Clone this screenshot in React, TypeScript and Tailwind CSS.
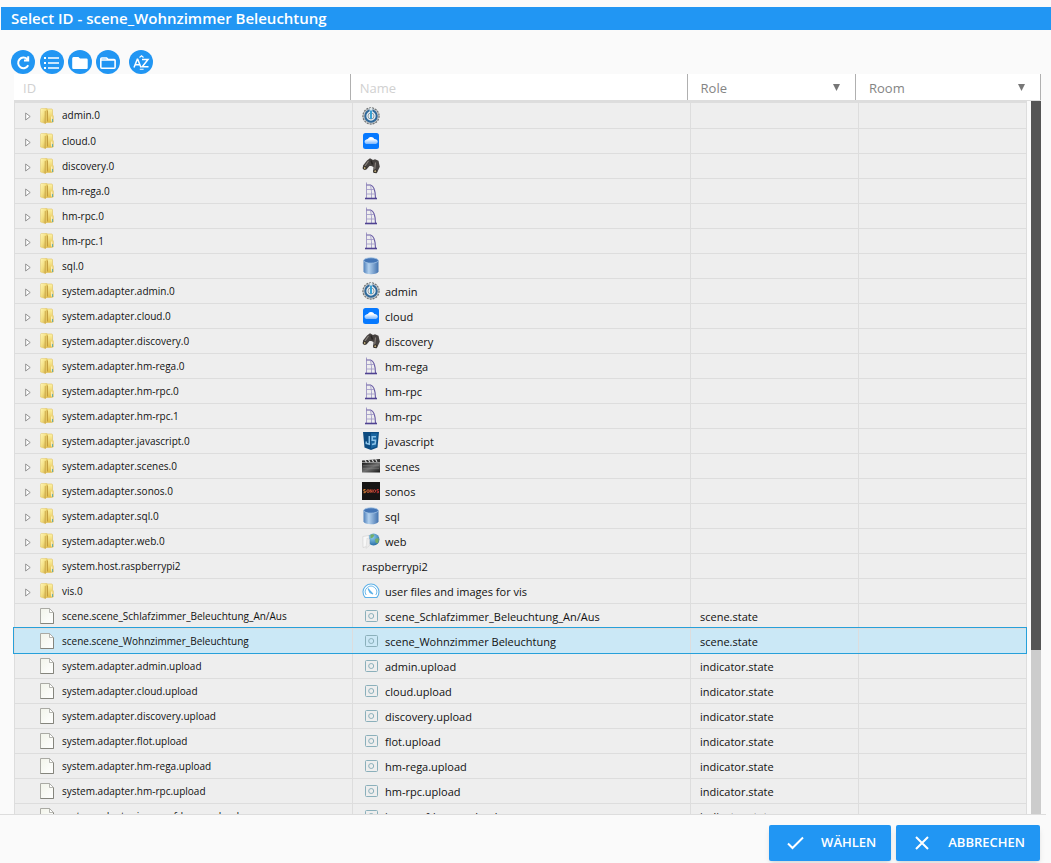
import React, { useState } from 'react';

type IconName =
  | 'admin'
  | 'cloud'
  | 'discovery'
  | 'homematic'
  | 'sql'
  | 'javascript'
  | 'scenes'
  | 'sonos'
  | 'web'
  | 'vis'
  | 'state';

interface ObjectRow {
  id: string;
  name?: string;
  icon?: IconName;
  role?: string;
  folder?: boolean;
}

const ROWS: ObjectRow[] = [
  { id: 'admin.0', icon: 'admin', folder: true },
  { id: 'cloud.0', icon: 'cloud', folder: true },
  { id: 'discovery.0', icon: 'discovery', folder: true },
  { id: 'hm-rega.0', icon: 'homematic', folder: true },
  { id: 'hm-rpc.0', icon: 'homematic', folder: true },
  { id: 'hm-rpc.1', icon: 'homematic', folder: true },
  { id: 'sql.0', icon: 'sql', folder: true },
  { id: 'system.adapter.admin.0', name: 'admin', icon: 'admin', folder: true },
  { id: 'system.adapter.cloud.0', name: 'cloud', icon: 'cloud', folder: true },
  { id: 'system.adapter.discovery.0', name: 'discovery', icon: 'discovery', folder: true },
  { id: 'system.adapter.hm-rega.0', name: 'hm-rega', icon: 'homematic', folder: true },
  { id: 'system.adapter.hm-rpc.0', name: 'hm-rpc', icon: 'homematic', folder: true },
  { id: 'system.adapter.hm-rpc.1', name: 'hm-rpc', icon: 'homematic', folder: true },
  { id: 'system.adapter.javascript.0', name: 'javascript', icon: 'javascript', folder: true },
  { id: 'system.adapter.scenes.0', name: 'scenes', icon: 'scenes', folder: true },
  { id: 'system.adapter.sonos.0', name: 'sonos', icon: 'sonos', folder: true },
  { id: 'system.adapter.sql.0', name: 'sql', icon: 'sql', folder: true },
  { id: 'system.adapter.web.0', name: 'web', icon: 'web', folder: true },
  { id: 'system.host.raspberrypi2', name: 'raspberrypi2', folder: true },
  { id: 'vis.0', name: 'user files and images for vis', icon: 'vis', folder: true },
  { id: 'scene.scene_Schlafzimmer_Beleuchtung_An/Aus', name: 'scene_Schlafzimmer_Beleuchtung_An/Aus', icon: 'state', role: 'scene.state' },
  { id: 'scene.scene_Wohnzimmer_Beleuchtung', name: 'scene_Wohnzimmer Beleuchtung', icon: 'state', role: 'scene.state' },
  { id: 'system.adapter.admin.upload', name: 'admin.upload', icon: 'state', role: 'indicator.state' },
  { id: 'system.adapter.cloud.upload', name: 'cloud.upload', icon: 'state', role: 'indicator.state' },
  { id: 'system.adapter.discovery.upload', name: 'discovery.upload', icon: 'state', role: 'indicator.state' },
  { id: 'system.adapter.flot.upload', name: 'flot.upload', icon: 'state', role: 'indicator.state' },
  { id: 'system.adapter.hm-rega.upload', name: 'hm-rega.upload', icon: 'state', role: 'indicator.state' },
  { id: 'system.adapter.hm-rpc.upload', name: 'hm-rpc.upload', icon: 'state', role: 'indicator.state' },
  { id: 'system.adapter.icons-mfd-png.upload', name: 'icons-mfd-png.upload', icon: 'state', role: 'indicator.state' },
];

// Gradients shared by all row icons
const IconDefs = () => (
  <svg className="absolute h-0 w-0" aria-hidden="true">
    <defs>
      <linearGradient id="folderLeft" x1="0" y1="0" x2="1" y2="1">
        <stop offset="0" stopColor="#fff6b8" />
        <stop offset="0.5" stopColor="#f3df80" />
        <stop offset="1" stopColor="#cda540" />
      </linearGradient>
      <linearGradient id="folderRight" x1="0" y1="0" x2="0" y2="1">
        <stop offset="0" stopColor="#fdf3a4" />
        <stop offset="1" stopColor="#e2bb45" />
      </linearGradient>
      <linearGradient id="page" x1="0" y1="0" x2="1" y2="1">
        <stop offset="0" stopColor="#f2f4ea" />
        <stop offset="1" stopColor="#ffffff" />
      </linearGradient>
      <linearGradient id="cloudFill" x1="0" y1="0" x2="0" y2="1">
        <stop offset="0.3" stopColor="#ffffff" />
        <stop offset="1" stopColor="#79b6ff" />
      </linearGradient>
      <linearGradient id="cylinder" x1="0" y1="0" x2="1" y2="0">
        <stop offset="0" stopColor="#4f80bb" />
        <stop offset="0.35" stopColor="#b3d1ee" />
        <stop offset="1" stopColor="#4372ae" />
      </linearGradient>
      <linearGradient id="board" x1="0" y1="0" x2="1" y2="1">
        <stop offset="0" stopColor="#1c1c1c" />
        <stop offset="0.5" stopColor="#707070" />
        <stop offset="1" stopColor="#151515" />
      </linearGradient>
      <radialGradient id="globe" cx="0.4" cy="0.3" r="0.8">
        <stop offset="0" stopColor="#8fd0f2" />
        <stop offset="1" stopColor="#1d629c" />
      </radialGradient>
    </defs>
  </svg>
);

const FolderIcon = () => (
  <svg width="14" height="16" viewBox="0 0 14 16" aria-hidden="true">
    <path d="M5 1h6.5q1 0 1 1v5l.8 1v6l-2.300.5H5z" fill="url(#folderRight)" stroke="#dfc05a" strokeWidth=".6" />
    <path d="M.5 1.500Q.5.500 1.500.500H7v13.500l-1.500 1.500-5-1.500z" fill="url(#folderLeft)" stroke="#e0c565" strokeWidth=".5" />
    <path d="M5.300 3 7.500 1v13l-2.200 1.500z" fill="#e4c765" />
    <path d="M7.500 2.500v11" stroke="#b58a2c" strokeWidth=".7" />
    <path d="M5.200 3v12.500" stroke="#c09a3a" strokeWidth=".6" />
    <path d="M11.800 8.500v5" stroke="#fffbe0" strokeWidth="1" />
    <path d="M12.500 11v3" stroke="#4aa6b0" strokeWidth=".8" />
  </svg>
);

const PageIcon = () => (
  <svg width="14" height="16" viewBox="0 0 14 16" aria-hidden="true">
    <path d="M.5.500h9l4 4v11H.5z" fill="url(#page)" stroke="#aaaaa4" />
    <path d="M.5 15.500h13V4.500" fill="none" stroke="#85857d" />
    <path d="M9.500.500v4h4z" fill="#fff" stroke="#a5a5a0" strokeWidth=".8" />
  </svg>
);

const RowIcon = ({ name }: { name: IconName }) => {
  switch (name) {
    case 'admin':
      return (
        <svg width="18" height="18" viewBox="0 0 18 18">
          <circle cx="9" cy="9" r="8.100" fill="#c5c7c8" stroke="#707577" strokeWidth="1.200" strokeDasharray="2 1" />
          <circle cx="9" cy="9" r="5.700" fill="#e3edf3" stroke="#2f6899" strokeWidth="2" />
          <circle cx="9" cy="9" r="3" fill="none" stroke="#858b90" strokeWidth=".8" />
          <path d="M7.600 1h2.800v4H7.600z" fill="#dce7ec" />
          <path d="M9 3.500v8.500" stroke="#3aa1d3" strokeWidth="2" />
        </svg>
      );
    case 'cloud':
      return (
        <svg width="18" height="18" viewBox="0 0 18 18">
          <rect x="1" y="1" width="16" height="16" rx="2.500" fill="#0679ff" />
          <path d="M4 12a2.300 2.300 0 0 1 0-4.300Q5.200 6.900 5.900 7q1-2.300 3.300-2 2.300.1 3.100 2 3 .1 3.500 2.700-.1 1.900-2 2.300z" fill="url(#cloudFill)" />
        </svg>
      );
    case 'discovery':
      return (
        <svg width="18" height="18" viewBox="0 0 18 18">
          <path d="m5 3.500 3-2.200L11 3l2-.8 3.500 1.600 1.300 6-3 6.500-3.800-.8.500-5.500-2.200-1-1.800 0-3 3.500L.8 11.500 1 8.500z" fill="#464240" />
          <path d="m6.500 4-3.500 5M13.500 5.500l-.8 7.500" stroke="#8a837d" strokeWidth="1.100" />
          <path d="m9 3.500 1.500 4" stroke="#282522" strokeWidth="1.500" />
          <circle cx="2.700" cy="11" r="1.500" fill="#b9a878" stroke="#2d2926" />
          <circle cx="13.200" cy="14.200" r="1.500" fill="#b9a878" stroke="#2d2926" />
        </svg>
      );
    case 'homematic':
      return (
        <svg width="18" height="18" viewBox="0 0 18 18" fill="none" stroke="#6759a4">
          <path d="M4.500.500v16" strokeWidth=".8" stroke="#9187bd" />
          <path d="M4.500 3H8.500q5 1.500 5 13.500" strokeWidth="1.100" />
          <path d="M8.500 3q1.500 6 1 13.500M4.500 7.500h8M4.500 12h9" strokeWidth=".8" stroke="#9c94c4" />
          <path d="M3 16.500h12" strokeWidth="1.600" stroke="#4f4291" />
        </svg>
      );
    case 'sql':
      return (
        <svg width="18" height="18" viewBox="0 0 18 18">
          <path d="M1.500 3.500v11q1 2.800 7.500 2.800t7.500-2.800v-11z" fill="url(#cylinder)" />
          <ellipse cx="9" cy="3.500" rx="7.300" ry="2.700" fill="#4475b5" stroke="#a5c5e6" strokeWidth=".8" />
        </svg>
      );
    case 'javascript':
      return (
        <svg width="18" height="18" viewBox="0 0 18 18">
          <path d="M1 0h16l-1.500 15.500L9 18l-6.500-2.500z" fill="#0c4b80" />
          <path d="M9 1.200h6.600l-1.300 13.300L9 16.500z" fill="#1a659f" />
          <path d="M7.300 4v8.300l-3-.8v-2M14 4.700h-3.800v3.500h3.300l-.3 3.600-3.200.8" fill="none" stroke="#8dc3e8" strokeWidth="1.500" />
        </svg>
      );
    case 'scenes':
      return (
        <svg width="18" height="18" viewBox="0 0 18 18">
          <path d="M0 6h18v9.500H0z" fill="url(#board)" />
          <path d="M0 3.500 18 2v3.500H0z" fill="#333" />
          <path d="m3 3 1.500 2.500M6.500 2.800 8 5.300M10 2.500 11.500 5M13.500 2.300 15 4.800" stroke="#ddd" strokeWidth="1.200" />
          <path d="M1 8.500h16M1 11.500h16" stroke="#888" strokeWidth=".4" />
        </svg>
      );
    case 'sonos':
      return (
        <svg width="18" height="18" viewBox="0 0 18 18">
          <path d="M0 0h18v18H0z" fill="#161414" />
          <g fill="none" strokeWidth=".9">
            <path d="M3.500 7.500H1.800v1.600h1.500v1.600H1.500" stroke="#e88a3c" />
            <circle cx="6" cy="9.100" r="1.300" stroke="#e0693a" />
            <path d="M8.200 10.900V7.500l1.800 3V7.300" stroke="#d65539" />
            <circle cx="12.400" cy="9.100" r="1.300" stroke="#d04438" />
            <path d="M16.700 7.500H15v1.600h1.500v1.600h-1.800" stroke="#cb3336" />
          </g>
        </svg>
      );
    case 'web':
      return (
        <svg width="18" height="18" viewBox="0 0 18 18">
          <circle cx="11.500" cy="7.500" r="6" fill="url(#globe)" />
          <path d="M8.500 3q2-1.500 4 0L11 5.500l-2.500 1zM13 7l3.500-1q1 3-1 5.500l-2-1z" fill="#75ae67" />
          <path d="m.8 4.500 6.200-1v10.500L1 15.500z" fill="#f7f7f7" stroke="#cfcfcf" strokeWidth=".6" />
          <path d="m5 6 2.500 1.500v6L4 16.500z" fill="#ececec" stroke="#d4d4d4" strokeWidth=".5" />
        </svg>
      );
    case 'vis':
      return (
        <svg width="18" height="18" viewBox="0 0 18 18" fill="none" stroke="#5eb1e8">
          <path d="M3.200 15.500a8 8 0 1 1 11.600 0z" fill="#fff" strokeWidth="1.100" />
          <path d="M4.200 13a5.700 5.700 0 1 1 9.600 0" strokeWidth=".9" />
          <path d="m6 6.500 5 5.500-3-1.500z" strokeWidth="1.100" />
        </svg>
      );
    default:
      return (
        <svg width="18" height="18" viewBox="0 0 18 18" fill="none" stroke="#8bb0bb">
          <rect x="3.500" y="3.500" width="12" height="11" rx="1" />
          <circle cx="9.200" cy="9" r="2.500" />
        </svg>
      );
  }
};

const TOOLS = [
  {
    label: 'Refresh',
    className: '',
    icon: <path d="M17.200 15.300A5.300 5.300 0 1 1 16.300 9.200M17.200 6.300v4.200H13" fill="none" stroke="#fff" strokeWidth="2" />,
  },
  {
    label: 'List view',
    className: 'ml-[5px]',
    icon: (
      <g stroke="#fff" strokeWidth="1.500">
        <path d="M8 8h11M8 13h11M8 18h11" />
        <path d="M4 8h2M4 13h2M4 18h2" strokeWidth="2" />
      </g>
    ),
  },
  {
    label: 'Collapse all',
    className: 'ml-1',
    icon: <path d="M5.500 7h5l1.500 1.500h6.500q1.200 0 1.200 1.200V17.500q0 1.500-1.200 1.500h-13Q4.200 19 4.200 17.500V8.500Q4.200 7 5.500 7z" fill="#fff" />,
  },
  {
    label: 'Expand all',
    className: 'ml-1',
    icon: <path d="M5.800 8h4.800l1.500 1.500h6q1 0 1 1v6.500q0 1.300-1 1.300H5.800q-1 0-1-1.300V9q0-1 1-1zM5 10h14" fill="none" stroke="#fff" strokeWidth="1.600" />,
  },
  {
    label: 'Sort alphabetically',
    className: 'ml-[9px]',
    icon: (
      <g fill="none" stroke="#fff" strokeWidth="1.500">
        <path d="m5 17.500 3.300-8.300h.4l3.300 8.300M6 14.700h5M13 9.500h6l-5.800 7.300h6.300" />
        <path d="m10.500 7.500 2-1.700 2 1.700M10.800 19.200h3.800" strokeWidth="1.100" />
      </g>
    ),
  },
];

const FilterSelect = ({ label }: { label: string }) => (
  <label className="relative block border-r border-[#b0b0b0]">
    <select aria-label={label} className="h-full w-full appearance-none bg-transparent pt-1 pl-[13px] text-[#848484] outline-none">
      <option>{label}</option>
    </select>
    <svg className="pointer-events-none absolute top-2.5 right-[15px]" width="7" height="7" viewBox="0 0 7 7">
      <path d="M0 0h7L3.500 7z" fill="#777" />
    </svg>
  </label>
);

const App: React.FC = () => {
  const [selectedId, setSelectedId] = useState('scene.scene_Wohnzimmer_Beleuchtung');
  const [idFilter, setIdFilter] = useState('');
  const [nameFilter, setNameFilter] = useState('');

  const visibleRows = ROWS.filter(
    row =>
      row.id.toLowerCase().includes(idFilter.toLowerCase()) &&
      (row.name || '').toLowerCase().includes(nameFilter.toLowerCase())
  );

  return (
    <div className="flex h-screen flex-col overflow-hidden bg-[#fafafa] pt-[7px] font-['Open_Sans','Noto_Sans',sans-serif] text-[11px] text-[#111]">
      <IconDefs />
      <h1 className="ml-px h-[23px] shrink-0 bg-[#2196f3] pl-2.5 text-[15px] leading-[22px] font-semibold text-white">
        Select ID - scene_Wohnzimmer Beleuchtung
      </h1>

      {/* Toolbar */}
      <div className="mt-5 flex shrink-0 pl-[11px]">
        {TOOLS.map(tool => (
          <button key={tool.label} type="button" aria-label={tool.label} className={`h-6 w-6 rounded-full bg-[#2196f3] ${tool.className}`}>
            <svg width="24" height="24" viewBox="0 0 24 24">{tool.icon}</svg>
          </button>
        ))}
      </div>

      <main className="flex min-h-0 flex-1 flex-col pr-2.5 pl-3.5">
        {/* Filters */}
        <div className="grid h-[27px] shrink-0 grid-cols-[2fr_2fr_1fr_185px] border-b border-[#ddd] bg-white text-[13px]">
          <input
            aria-label="ID"
            placeholder="ID"
            value={idFilter}
            onChange={e => setIdFilter(e.target.value)}
            className="min-w-0 border-r border-[#b0b0b0] pt-1 pl-[9px] outline-none placeholder:text-[#d1d1d1]"
          />
          <input
            aria-label="Name"
            placeholder="Name"
            value={nameFilter}
            onChange={e => setNameFilter(e.target.value)}
            className="min-w-0 border-r border-[#b0b0b0] pt-1 pl-[9px] outline-none placeholder:text-[#d1d1d1]"
          />
          <FilterSelect label="Role" />
          <FilterSelect label="Room" />
        </div>

        {/* Object tree */}
        <div className="-ml-px flex min-h-0 flex-1">
          <div className="min-w-0 flex-1 overflow-hidden pl-px">
            <table className="w-full table-fixed border-separate border-spacing-0 border-t-2 border-l border-[#ddd] bg-[#eee]">
              <colgroup>
                <col className="w-[33.4%]" />
                <col className="w-[33.4%]" />
                <col className="w-[16.6%]" />
                <col />
              </colgroup>
              <tbody>
                {visibleRows.map(row => {
                  const selected = row.id === selectedId;
                  return (
                    <tr
                      key={row.id}
                      onClick={() => setSelectedId(row.id)}
                      className={`relative h-[25px] cursor-default whitespace-nowrap first:h-[26px] *:border-r *:border-b *:border-[#ddd] *:p-0 ${selected ? 'bg-[#cbe8f6]' : ''}`}
                    >
                      <td>
                        <div className="flex h-6 items-center pl-2.5">
                          <span className="flex w-[15px] pt-0.5">
                            {row.folder && (
                              <svg width="6" height="9" viewBox="0 0 6 9">
                                <path d="M.7 1v7L5.200 4.500z" fill="#fff" stroke="#888" strokeWidth=".9" />
                              </svg>
                            )}
                          </span>
                          {row.folder ? <FolderIcon /> : <PageIcon />}
                          <span className="pl-2 text-[10px]">{row.id}</span>
                        </div>
                        {selected && <span className="pointer-events-none absolute -top-0.5 right-0 bottom-0 -left-0.5 border border-[#26a0da]" />}
                      </td>
                      <td>
                        <div className="flex h-6 items-center gap-[5px] pl-[9px]">
                          {row.icon && <RowIcon name={row.icon} />}
                          <span className="pt-0.5">{row.name}</span>
                        </div>
                      </td>
                      <td>
                        <div className="pt-0.5 pl-[9px]">{row.role}</div>
                      </td>
                      <td />
                    </tr>
                  );
                })}
              </tbody>
            </table>
          </div>
          <div className="ml-1 w-2.5 shrink-0 bg-[#ccc]">
            <div className="h-[77%] bg-[#555]" />
          </div>
        </div>
      </main>

      <footer className="mr-[5px] flex h-[49px] shrink-0 items-start justify-end gap-[5px] border-t border-[#ddd] pt-2.5 pr-1.5 text-[13px] font-semibold text-white">
        <button type="button" className="flex h-9 items-center gap-4 rounded-xs bg-[#2196f3] pr-[15px] pl-4 shadow-md">
          <svg width="20" height="20" viewBox="0 0 20 20" fill="none" stroke="#fff" strokeWidth="2">
            <path d="m3 10.500 4.500 4.500L18 4.500" />
          </svg>
          WÄHLEN
        </button>
        <button type="button" className="flex h-9 items-center gap-4 rounded-xs bg-[#2196f3] pr-[15px] pl-4 shadow-md">
          <svg width="20" height="20" viewBox="0 0 20 20" fill="none" stroke="#fff" strokeWidth="2">
            <path d="m4 4 12 12M16 4 4 16" />
          </svg>
          ABBRECHEN
        </button>
      </footer>
    </div>
  );
};

export default App;
